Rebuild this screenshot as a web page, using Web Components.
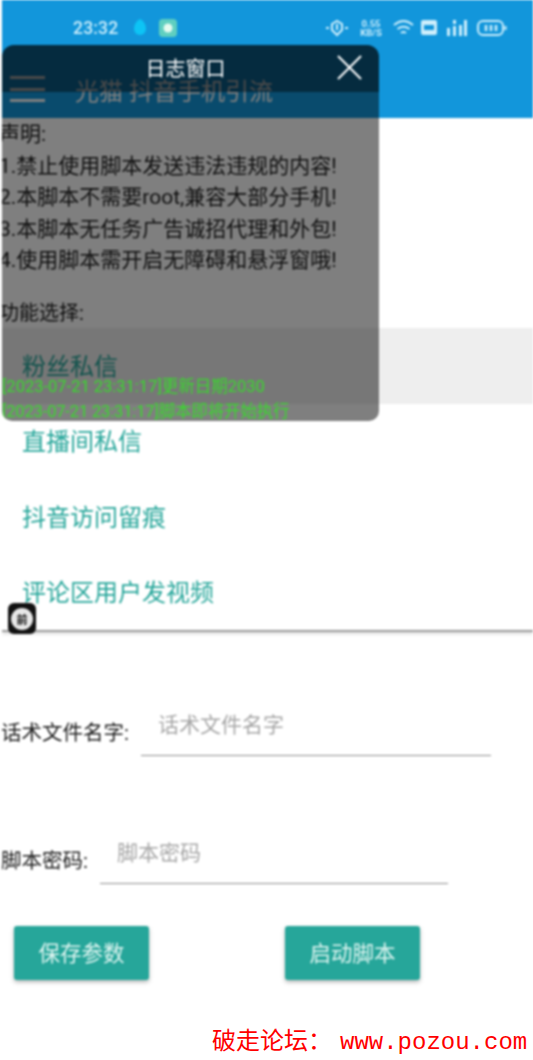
<!DOCTYPE html>
<html lang="zh">
<head>
<meta charset="utf-8">
<title>光猫 抖音手机引流</title>
<style>
    html, body { margin: 0; height: 100%; background: #fff; overflow: hidden; }
    body { font-family: Roboto, "Noto Sans CJK SC", sans-serif; }
</style>
</head>
<body>
<app-page>
    <status-bar slot="top"></status-bar>
    <tool-bar slot="top" title="光猫 抖音手机引流"></tool-bar>

    <notice-text>
        <p>声明:</p>
        <p>1.禁止使用脚本发送违法违规的内容!</p>
        <p>2.本脚本不需要root,兼容大部分手机!</p>
        <p>3.本脚本无任务广告诚招代理和外包!</p>
        <p>4.使用脚本需开启无障碍和悬浮窗哦!</p>
        <p class="gap">功能选择:</p>
    </notice-text>

    <list-row selected>粉丝私信</list-row>
    <list-row>直播间私信</list-row>
    <list-row>抖音访问留痕</list-row>
    <list-row>评论区用户发视频</list-row>
    <list-divider></list-divider>

    <form-field label="话术文件名字:" placeholder="话术文件名字" label-width="139" line-width="350" top="64"></form-field>
    <form-field label="脚本密码:" placeholder="脚本密码" label-width="98" line-width="348" top="68"></form-field>

    <button-row>
        <teal-button>保存参数</teal-button>
        <teal-button>启动脚本</teal-button>
    </button-row>

    <log-window slot="over" title="日志窗口">
        <div>[2023-07-21 23:31:17]更新日期2030</div>
        <div>[2023-07-21 23:31:17]脚本即将开始执行</div>
    </log-window>
    <float-badge slot="over"></float-badge>
</app-page>
<water-mark></water-mark>

<script>
// page frame, 2px white strip on the left like the screenshot
// the blur is for the soft look of the photo, the watermark stays outside it
class AppPage extends HTMLElement {
    constructor() {
        super()
        this.attachShadow({ mode: 'open' }).innerHTML = `
            <style>
                :host { display: block; height: 1028px; box-sizing: border-box; padding-left: 2px; position: relative; overflow: hidden; background: #fff; filter: blur(0.8px); }
                .col { display: flex; flex-direction: column; height: 100%; overflow: hidden; }
            </style>
            <div class="col">
                <slot name="top"></slot>
                <slot></slot>
            </div>
            <slot name="over"></slot>
        `
    }
}

class StatusBar extends HTMLElement {
    constructor() {
        super()
        this.attachShadow({ mode: 'open' }).innerHTML = `
            <style>
                :host { display: flex; align-items: center; height: 45px; box-sizing: border-box; padding: 10px 26px 0 71px; background: #1296db; color: #cdeefc; }
                .time { font: 500 17.5px Roboto, sans-serif; width: 60px; letter-spacing: .2px; }
                .left { display: flex; align-items: center; gap: 12px; }
                .right { margin-left: auto; display: flex; align-items: center; gap: 9px; }
                .speed { font: 700 9.5px/9px Roboto, sans-serif; text-align: center; width: 24px; }
                .wifi { margin-right: -3px; }
                svg { display: block; }
            </style>
            <span class="time">23:32</span>
            <div class="left">
                <svg width="14" height="20" viewBox="0 0 14 20"><path d="M7 1c4 2 6 6 6 10a6 6 0 0 1-12 0c0-4 2-8 6-10z" fill="#0dc4f5"/></svg>
                <svg width="18" height="18" viewBox="0 0 18 18"><rect width="18" height="18" rx="4" fill="#5fcfc0"/><circle cx="9" cy="9" r="4.5" fill="#e6fbf0"/></svg>
            </div>
            <div class="right">
                <svg width="26" height="18" viewBox="0 0 26 18" fill="none" stroke="#cdeefc" stroke-width="2"><path d="M2 9h3M21 9h3"/><path d="M8 5l5-3 5 3v6l-5 5-5-5z"/><path d="M13 5v6" /></svg>
                <span class="speed">0.55<br>KB/S</span>
                <svg class="wifi" width="23" height="18" viewBox="0 0 23 18" fill="none" stroke="#cdeefc" stroke-width="2"><path d="M2 6c6-5 13-5 19 0M5.5 10c4-3 8-3 12 0M9 14c2-1.500 3-1.500 5 0"/></svg>
                <svg width="16" height="15" viewBox="0 0 16 15"><rect width="16" height="15" rx="2" fill="#cdeefc"/><rect x="3" y="5" width="10" height="5" fill="#1296db"/></svg>
                <svg width="22" height="18" viewBox="0 0 22 18" fill="#cdeefc"><rect x="1" y="9" width="3" height="8"/><rect x="7" y="1" width="3" height="4"/><rect x="7" y="7" width="3" height="10"/><rect x="13" y="6" width="3" height="11"/><rect x="18" y="1" width="3" height="16"/></svg>
                <svg width="30" height="18" viewBox="0 0 30 18" fill="none" stroke="#cdeefc" stroke-width="2"><rect x="1" y="2" width="25" height="14" rx="5"/><path d="M28.500 7v4"/><path d="M9 6v6M14 6v6M19 6v6" stroke-width="2.500"/></svg>
            </div>
        `
    }
}

class ToolBar extends HTMLElement {
    connectedCallback() {
        this.attachShadow({ mode: 'open' }).innerHTML = `
            <style>
                :host { display: flex; align-items: center; height: 73px; box-sizing: border-box; padding-left: 8px; background: #1296db; color: #fff; }
                .menu { width: 35px; display: flex; flex-direction: column; gap: 8.5px; margin-top: 15px; }
                .menu i { display: block; height: 3px; background: #fff; }
                .title { margin-left: 30px; margin-top: 21px; font-size: 24px; line-height: 30px; }
            </style>
            <div class="menu"><i></i><i></i><i></i></div>
            <div class="title">${this.getAttribute('title')}</div>
        `
    }
}

class NoticeText extends HTMLElement {
    constructor() {
        super()
        this.attachShadow({ mode: 'open' }).innerHTML = `
            <style>
                :host { display: block; height: 210px; box-sizing: border-box; padding-top: 1px; margin-left: -3px; font-size: 21px; line-height: 31.5px; color: #1c1c1c; }
                ::slotted(p) { margin: 0; }
                ::slotted(p.gap) { margin-top: 21px; font-size: 20px; }
            </style>
            <slot></slot>
        `
    }
}

class ListRow extends HTMLElement {
    constructor() {
        super()
        this.attachShadow({ mode: 'open' }).innerHTML = `
            <style>
                :host { display: flex; align-items: center; height: 75.5px; flex: none; padding-left: 20px; padding-bottom: 3px; box-sizing: border-box; font-size: 24px; color: #26a69a; }
                :host([selected]) { background: #eeeeee; }
            </style>
            <slot></slot>
        `
    }
}

class ListDivider extends HTMLElement {
    constructor() {
        super()
        this.attachShadow({ mode: 'open' }).innerHTML = `
            <style>
                :host { display: block; height: 2px; flex: none; background: #9a9a9a; box-shadow: 0 2px 3px rgba(0,0,0,.18); }
            </style>
        `
    }
}

class FormField extends HTMLElement {
    connectedCallback() {
        const labelWidth = this.getAttribute('label-width')
        const lineWidth = this.getAttribute('line-width')
        this.attachShadow({ mode: 'open' }).innerHTML = `
            <style>
                :host { display: flex; align-items: flex-end; height: 60px; flex: none; margin-top: ${this.getAttribute('top')}px; }
                .label { width: ${labelWidth}px; flex: none; margin-left: -1px; padding-bottom: 8px; font-size: 20.500px; line-height: 30px; color: #1c1c1c; white-space: nowrap; }
                .input { width: ${lineWidth}px; margin-left: 1px; box-sizing: border-box; padding: 0 0 15px 17px; border-bottom: 1px solid #8d8d8d; font-size: 21px; line-height: 30px; color: #a6a6a6; }
            </style>
            <div class="label">${this.getAttribute('label')}</div>
            <div class="input">${this.getAttribute('placeholder')}</div>
        `
    }
}

class ButtonRow extends HTMLElement {
    constructor() {
        super()
        this.attachShadow({ mode: 'open' }).innerHTML = `
            <style>
                :host { display: flex; flex: none; gap: 136px; margin-top: 42px; padding-left: 12px; }
            </style>
            <slot></slot>
        `
    }
}

class TealButton extends HTMLElement {
    constructor() {
        super()
        this.attachShadow({ mode: 'open' }).innerHTML = `
            <style>
                :host { display: flex; align-items: center; justify-content: center; width: 135px; height: 54px; box-sizing: border-box; padding-bottom: 4px; border-radius: 3px; background: #26a69a; color: #dff5f1; font-size: 21.5px; box-shadow: 0 2px 4px rgba(0,0,0,.3); }
            </style>
            <slot></slot>
        `
    }
}

class WaterMark extends HTMLElement {
    constructor() {
        super()
        this.attachShadow({ mode: 'open' }).innerHTML = `
            <style>
                :host { display: block; padding-left: 212px; color: #f00; font: 24px/30px "Liberation Mono", "Noto Sans CJK SC", monospace; white-space: nowrap; }
                span { margin-left: 8px; }
            </style>
            破走论坛：<span>www.pozou.com</span>
        `
    }
}

// floating log window, sits over the page
class LogWindow extends HTMLElement {
    connectedCallback() {
        this.attachShadow({ mode: 'open' }).innerHTML = `
            <style>
                :host { position: absolute; left: 2px; top: 45px; width: 377px; height: 376px; display: flex; flex-direction: column; overflow: hidden; border-radius: 12px 12px 10px 10px; background: rgba(0,0,0,.5); }
                .head { display: flex; align-items: center; justify-content: center; height: 47px; flex: none; position: relative; background: rgba(0,0,0,.42); color: #fff; font-size: 20px; }
                .head span { margin-top: -2px; margin-right: 10px; }
                .head svg { position: absolute; left: 335px; top: 10px; }
                .body { margin-top: auto; margin-bottom: -3px; font-size: 16.500px; line-height: 25px; color: #38d92c; white-space: nowrap; }
                ::slotted(div:last-child) { letter-spacing: -.15px; }
            </style>
            <div class="head">
                <span>${this.getAttribute('title')}</span>
                <svg width="25" height="25" viewBox="0 0 25 25" fill="none" stroke="#fff" stroke-width="2"><path d="M1 1l23 23M24 1L1 24"/></svg>
            </div>
            <div class="body"><slot></slot></div>
        `
    }
}

class FloatBadge extends HTMLElement {
    constructor() {
        super()
        this.attachShadow({ mode: 'open' }).innerHTML = `
            <style>
                :host { position: absolute; left: 8px; top: 603px; width: 28px; height: 31px; border-radius: 6px; background: #111; display: flex; align-items: center; justify-content: center; }
                div { width: 22px; height: 22px; border-radius: 50%; background: #e8e8e8; display: flex; align-items: center; justify-content: center; font: 700 11px "Noto Sans CJK SC", sans-serif; color: #111; }
            </style>
            <div>前</div>
        `
    }
}

customElements.define('app-page', AppPage)
customElements.define('status-bar', StatusBar)
customElements.define('tool-bar', ToolBar)
customElements.define('notice-text', NoticeText)
customElements.define('list-row', ListRow)
customElements.define('list-divider', ListDivider)
customElements.define('form-field', FormField)
customElements.define('button-row', ButtonRow)
customElements.define('teal-button', TealButton)
customElements.define('water-mark', WaterMark)
customElements.define('log-window', LogWindow)
customElements.define('float-badge', FloatBadge)
</script>
</body>
</html>
